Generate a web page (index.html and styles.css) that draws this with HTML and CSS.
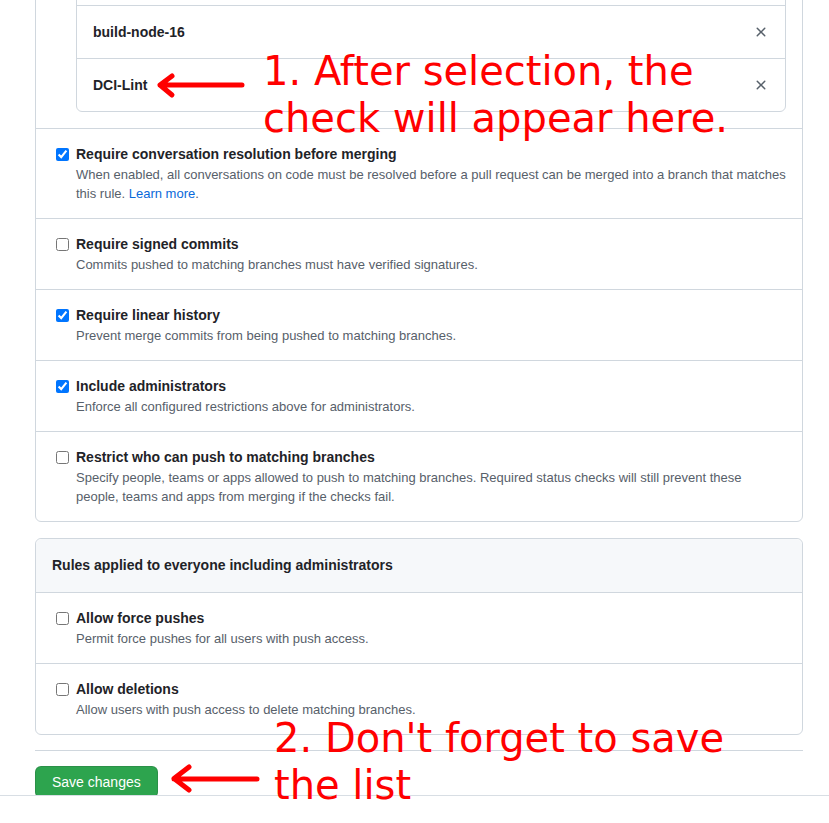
FILE: index.html
```html
<!DOCTYPE html>
<html lang="en">
<head>
<meta charset="utf-8">
<title>Branch protection rule</title>
<link rel="stylesheet" href="styles.css">
</head>
<body>
<main class="page">
  <div class="box">
    <div class="rule">
      <input type="checkbox" class="check" checked>
      <div class="rule-body">
        <div class="rule-title">Require status checks to pass before merging</div>
        <div class="rule-desc">Choose which status checks must pass before branches can be merged.</div>
        <ul class="checks">
          <li class="check-row"><span class="check-name">build-node-14</span><button class="remove" aria-label="Remove"><svg viewBox="0 0 16 16" width="16" height="16"><path d="M3.72 3.72a.75.75 0 0 1 1.06 0L8 6.940l3.22-3.22a.749.749 0 0 1 1.275.326.749.749 0 0 1-.215.734L9.06 8l3.22 3.22a.749.749 0 0 1-.326 1.275.749.749 0 0 1-.734-.215L8 9.06l-3.22 3.22a.751.751 0 0 1-1.042-.018.751.751 0 0 1-.018-1.042L6.94 8 3.72 4.78a.75.75 0 0 1 0-1.06Z"/></svg></button></li>
          <li class="check-row"><span class="check-name">build-node-16</span><button class="remove" aria-label="Remove"><svg viewBox="0 0 16 16" width="16" height="16"><path d="M3.72 3.72a.75.75 0 0 1 1.06 0L8 6.94l3.22-3.22a.749.749 0 0 1 1.275.326.749.749 0 0 1-.215.734L9.06 8l3.22 3.22a.749.749 0 0 1-.326 1.275.749.749 0 0 1-.734-.215L8 9.06l-3.22 3.22a.751.751 0 0 1-1.042-.018.751.751 0 0 1-.018-1.042L6.94 8 3.72 4.78a.75.75 0 0 1 0-1.06Z"/></svg></button></li>
          <li class="check-row"><span class="check-name">DCI-Lint</span><button class="remove" aria-label="Remove"><svg viewBox="0 0 16 16" width="16" height="16"><path d="M3.72 3.72a.75.75 0 0 1 1.06 0L8 6.94l3.22-3.22a.749.749 0 0 1 1.275.326.749.749 0 0 1-.215.734L9.06 8l3.22 3.22a.749.749 0 0 1-.326 1.275.749.749 0 0 1-.734-.215L8 9.06l-3.22 3.22a.751.751 0 0 1-1.042-.018.751.751 0 0 1-.018-1.042L6.94 8 3.72 4.78a.75.75 0 0 1 0-1.06Z"/></svg></button></li>
        </ul>
      </div>
    </div>
    <div class="rule">
      <input type="checkbox" class="check" checked>
      <div class="rule-body">
        <div class="rule-title">Require conversation resolution before merging</div>
        <div class="rule-desc">When enabled, all conversations on code must be resolved before a pull request can be merged into a branch that matches this rule. <a href="#" class="link">Learn more</a>.</div>
      </div>
    </div>
    <div class="rule">
      <input type="checkbox" class="check">
      <div class="rule-body">
        <div class="rule-title">Require signed commits</div>
        <div class="rule-desc">Commits pushed to matching branches must have verified signatures.</div>
      </div>
    </div>
    <div class="rule">
      <input type="checkbox" class="check" checked>
      <div class="rule-body">
        <div class="rule-title">Require linear history</div>
        <div class="rule-desc">Prevent merge commits from being pushed to matching branches.</div>
      </div>
    </div>
    <div class="rule">
      <input type="checkbox" class="check" checked>
      <div class="rule-body">
        <div class="rule-title">Include administrators</div>
        <div class="rule-desc">Enforce all configured restrictions above for administrators.</div>
      </div>
    </div>
    <div class="rule">
      <input type="checkbox" class="check">
      <div class="rule-body">
        <div class="rule-title">Restrict who can push to matching branches</div>
        <div class="rule-desc">Specify people, teams or apps allowed to push to matching branches. Required status checks will still prevent these people, teams and apps from merging if the checks fail.</div>
      </div>
    </div>
  </div>

  <div class="box box-second">
    <div class="box-header">Rules applied to everyone including administrators</div>
    <div class="rule">
      <input type="checkbox" class="check">
      <div class="rule-body">
        <div class="rule-title">Allow force pushes</div>
        <div class="rule-desc">Permit force pushes for all users with push access.</div>
      </div>
    </div>
    <div class="rule">
      <input type="checkbox" class="check">
      <div class="rule-body">
        <div class="rule-title">Allow deletions</div>
        <div class="rule-desc">Allow users with push access to delete matching branches.</div>
      </div>
    </div>
  </div>

  <hr class="divider">
  <div class="actions">
    <button class="btn-primary">Save changes</button>
  </div>
</main>
<div class="footer"></div>

<div class="note note-one">1. After selection, the<br>check will appear here.</div>
<div class="note note-two">2. Don't forget to save<br>the list</div>
<svg class="arrows" width="829" height="823" viewBox="0 0 829 823">
  <g fill="none" stroke="#ff0000" stroke-width="5" stroke-linecap="round" stroke-linejoin="round">
    <path d="M242 85 H160 M172 76 L160 85 L172 95"/>
    <path d="M257 779 H174 M189 767 L174 778.5 L189 790"/>
  </g>
</svg>
</body>
</html>
```

FILE: styles.css
```css
html {
  overflow: hidden;
}

body {
  margin: 0;
  background: #ffffff;
  font-family: "Liberation Sans", Arial, sans-serif;
  color: #1f2328;
}

.page {
  margin: -111px 26px 0 35px;
  width: 768px;
}

.box {
  border: 1px solid #d0d7de;
  border-radius: 6px;
  background: #ffffff;
}

.box-second {
  margin-top: 16px;
}

.box-header {
  background: #f6f8fa;
  padding: 16px 16px 17px;
  font-size: 14px;
  line-height: 20px;
  font-weight: bold;
  border-bottom: 1px solid #d0d7de;
  border-radius: 6px 6px 0 0;
}

.rule {
  display: grid;
  grid-template-columns: 24px 1fr;
  padding: 15px 16px 15px;
  border-top: 1px solid #d0d7de;
}

.rule:first-child {
  border-top: none;
  padding-bottom: 16px;
}

.box-header + .rule {
  border-top: none;
}

.check {
  width: 13px;
  height: 13px;
  margin: 4px 0 0 4px;
}

.rule-title {
  font-size: 14px;
  line-height: 20px;
  font-weight: bold;
}

.rule-desc {
  font-size: 13px;
  line-height: 19px;
  padding-top: 1px;
  color: #57606a;
}

.link {
  color: #0969da;
  text-decoration: none;
}

.checks {
  list-style: none;
  margin: 7px 0 0;
  padding: 0;
  border: 1px solid #d0d7de;
  border-radius: 6px;
}

.check-row {
  display: flex;
  align-items: center;
  justify-content: space-between;
  height: 52px;
  padding: 0 16px;
  border-top: 1px solid #d0d7de;
}

.check-row:first-child {
  border-top: none;
}

.check-name {
  font-size: 14px;
  line-height: 20px;
  font-weight: bold;
}

.remove {
  display: flex;
  align-items: center;
  justify-content: center;
  width: 16px;
  height: 16px;
  padding: 0;
  border: none;
  background: transparent;
  fill: #57606a;
}

.divider {
  border: none;
  border-top: 1px solid #d0d7de;
  margin: 15px 0 15px;
  height: 0;
}

.actions {
  height: 29px;
  overflow: hidden;
}

.btn-primary {
  height: 32px;
  padding: 0 16px;
  border: 1px solid rgba(31, 35, 40, 0.15);
  border-radius: 6px;
  background: #2da44e;
  color: #ffffff;
  font-family: "Liberation Sans", Arial, sans-serif;
  font-size: 14px;
  line-height: 20px;
}

.footer {
  border-top: 1px solid #d8dee4;
  height: 27px;
  background: #ffffff;
}

.note {
  position: absolute;
  font-family: "DejaVu Sans", sans-serif;
  font-size: 40px;
  line-height: 47px;
  color: #ff0000;
  white-space: nowrap;
}

.note-one {
  left: 263px;
  top: 48px;
}

.note-two {
  left: 274px;
  top: 715px;
}

.arrows {
  position: absolute;
  left: 0;
  top: 0;
  pointer-events: none;
}
```
